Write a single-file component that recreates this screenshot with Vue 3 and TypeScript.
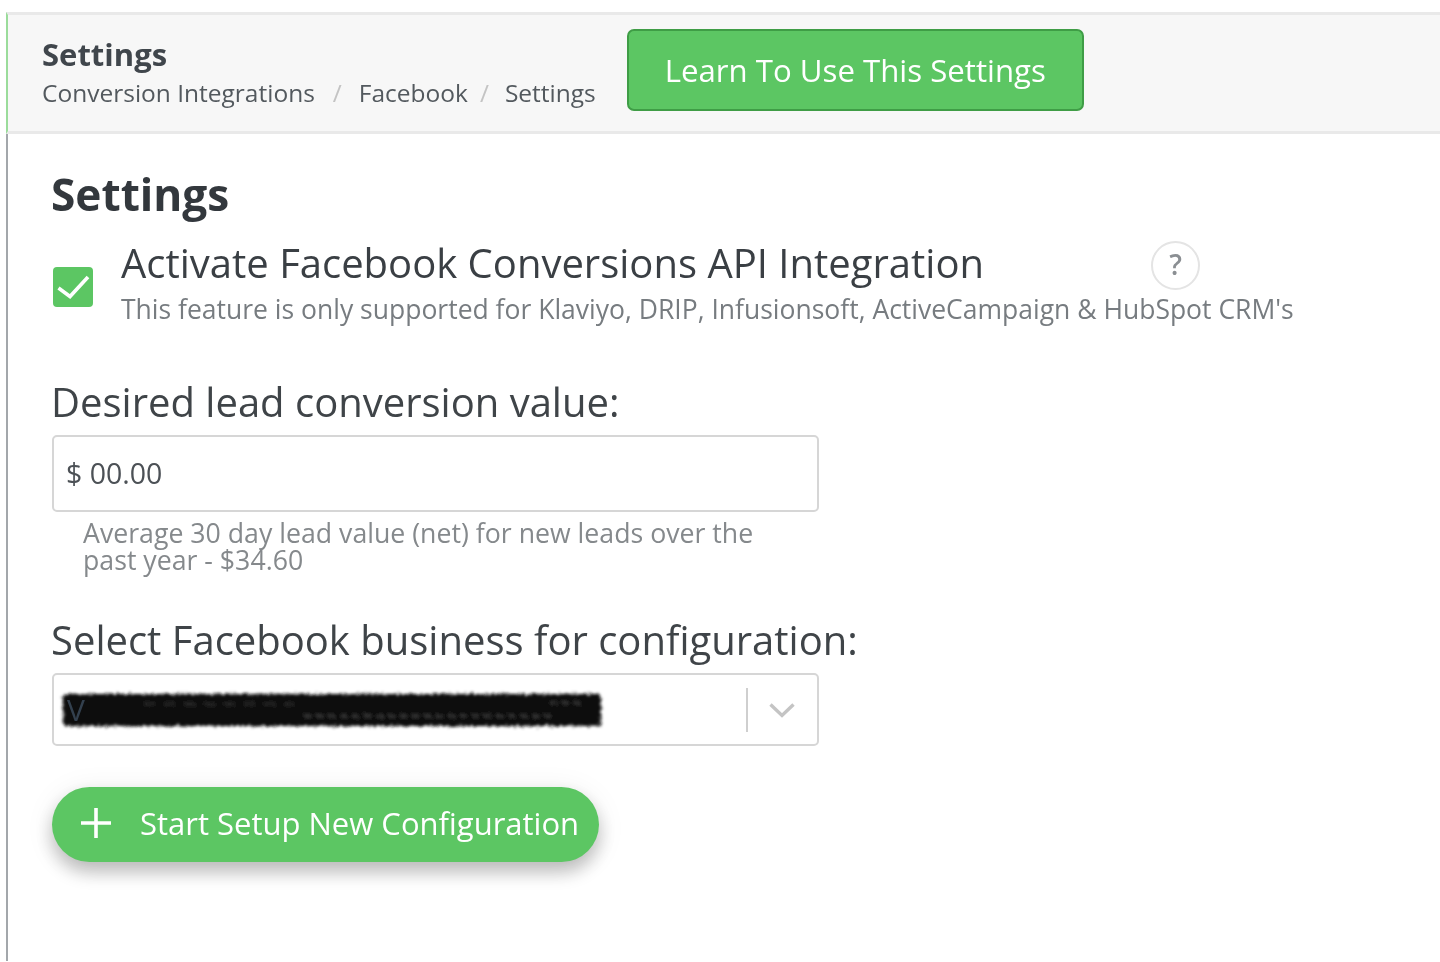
<script setup lang="ts">
const crumbs: string[] = ['Conversion Integrations', 'Facebook', 'Settings']
</script>

<template>
  <div class="page">
    <header class="bar">
      <div class="titles">
        <div class="bar-title">Settings</div>
        <nav class="crumbs">
          <span class="crumb c1">{{ crumbs[0] }}</span>
          <span class="sep s1">/</span>
          <span class="crumb">{{ crumbs[1] }}</span>
          <span class="sep s2">/</span>
          <span class="crumb">{{ crumbs[2] }}</span>
        </nav>
      </div>
      <button class="learn" type="button">Learn To Use This Settings</button>
    </header>
    <main class="body">
      <h2 class="heading">Settings</h2>
      <div class="activate">
        <span class="check">
          <svg width="40" height="40" viewBox="0 0 40 40" fill="none">
            <path d="M5.5 21 L17 29.5 L35 10" stroke="#fff" stroke-width="3.6" />
          </svg>
        </span>
        <div class="activate-text">
          <div class="activate-row">
            <span class="activate-label">Activate Facebook Conversions API Integration</span>
            <span class="help">?</span>
          </div>
          <div class="activate-note">This feature is only supported for Klaviyo, DRIP, Infusionsoft, ActiveCampaign &amp; HubSpot CRM's</div>
        </div>
      </div>
      <label class="field-label first">Desired lead conversion value:</label>
      <div class="input">$ 00.00</div>
      <p class="hint">Average 30 day lead value (net) for new leads over the past year - $34.60</p>
      <label class="field-label second">Select Facebook business for configuration:</label>
      <div class="select">
        <svg class="scribble" width="552" height="48" viewBox="0 0 552 48" fill="none">
          <defs>
            <filter id="rough" x="-5%" y="-40%" width="110%" height="180%">
              <feTurbulence type="fractalNoise" baseFrequency="0.35 0.8" numOctaves="2" seed="4" result="n" />
              <feDisplacementMap in="SourceGraphic" in2="n" scale="7" />
              <feGaussianBlur stdDeviation="1.4" />
            </filter>
          </defs>
          <g filter="url(#rough)">
            <rect x="9" y="8" width="538" height="32" rx="4" fill="#101010" />
            <path d="M250 30 H500 M496 17 H532" stroke="#343434" stroke-width="3" stroke-dasharray="7 5" />
            <path d="M90 18 H240" stroke="#262626" stroke-width="3" stroke-dasharray="11 9" />
          </g>
          <text x="13" y="35" class="scribble-v">V</text>
        </svg>
        <span class="divider"></span>
        <svg class="chev" width="26" height="16" viewBox="0 0 26 16" fill="none">
          <path d="M1.5 2.5 L13 13.5 L24.5 2.5" stroke="#c4c4c4" stroke-width="3.4" />
        </svg>
      </div>
      <button class="start" type="button">
        <svg width="32" height="32" viewBox="0 0 32 32" fill="none">
          <path d="M16 1 V31 M1 16 H31" stroke="#fff" stroke-width="3.6" />
        </svg>
        <span>Start Setup New Configuration</span>
      </button>
    </main>
  </div>
</template>

<style>
html, body { margin: 0; background: #fff; }
</style>

<style scoped>
.page {
  box-sizing: border-box;
  height: 962px;
  padding: 12px 0 0 6px;
  overflow: hidden;
  font-family: "Open Sans", sans-serif;
  color: #3a3f44;
  filter: blur(0.6px);
}
.bar {
  box-sizing: border-box;
  height: 122px;
  display: flex;
  align-items: flex-start;
  gap: 31px;
  padding: 20px 0 0 34px;
  background: #f7f7f7;
  border-top: 3px solid #e9e9e9;
  border-bottom: 3px solid #e9e9e9;
  border-left: 2px solid #9bdc9b;
}
.bar-title {
  font-size: 31px;
  font-weight: 700;
  line-height: 38px;
  color: #40464c;
}
.crumbs {
  display: flex;
  margin-top: 3px;
  font-size: 24.5px;
  line-height: 34px;
  color: #53595e;
  white-space: nowrap;
}
.sep { color: #c4c4c4; }
.s1 { margin: 0 17px 0 18px; }
.s2 { margin: 0 16px 0 12px; }
.learn {
  box-sizing: border-box;
  width: 457px;
  height: 82px;
  margin-top: -6px;
  border: 2px solid #3f9d46;
  border-radius: 7px;
  background: #5cc663;
  color: #fff;
  font-family: inherit;
  font-size: 31.2px;
}
.body {
  box-sizing: border-box;
  height: 827px;
  padding: 32px 0 0 44px;
  border-left: 2px solid #a3a7ab;
}
.heading {
  margin: 0 0 0 -1px;
  font-size: 44.2px;
  line-height: 56px;
  font-weight: 700;
  color: #33383d;
}
.activate {
  display: flex;
  gap: 28px;
  margin-top: 15px;
}
.check {
  flex: none;
  width: 40px;
  height: 40px;
  margin: 30px 0 0 1px;
  border-radius: 4px;
  background: #5cc663;
}
.check svg { display: block; }
.activate-text { min-width: 0; }
.activate-row {
  display: flex;
  align-items: flex-start;
  height: 52px;
}
.activate-label {
  font-size: 40px;
  line-height: 52px;
  color: #3a3f44;
  white-space: nowrap;
}
.help {
  box-sizing: border-box;
  flex: none;
  width: 49px;
  height: 49px;
  margin: 4px 0 0 167px;
  border: 2px solid #e4e4e4;
  border-radius: 50%;
  color: #8b8f93;
  font-size: 28px;
  font-weight: 600;
  line-height: 43px;
  text-align: center;
}
.activate-note {
  margin-top: 2px;
  font-size: 26.5px;
  line-height: 36px;
  color: #777c80;
  white-space: nowrap;
}
.field-label {
  display: block;
  margin-left: -1px;
  font-size: 40px;
  line-height: 52px;
  color: #3f4448;
}
.first { margin-top: 49px; }
.second { margin-top: 41px; }
.input {
  box-sizing: border-box;
  width: 767px;
  height: 77px;
  margin-top: 7px;
  padding-left: 12px;
  border: 2px solid #d6d6d6;
  border-radius: 5px;
  font-size: 28.5px;
  line-height: 72px;
  color: #4c5156;
}
.hint {
  width: 700px;
  margin: 7px 0 0 31px;
  font-size: 26.7px;
  line-height: 27px;
  color: #85898c;
}
.select {
  box-sizing: border-box;
  width: 767px;
  height: 73px;
  margin-top: 7px;
  display: flex;
  align-items: center;
  border: 2px solid #d6d6d6;
  border-radius: 5px;
}
.scribble {
  flex: none;
  overflow: visible;
}
.scribble-v {
  font-family: "Open Sans", sans-serif;
  font-size: 30px;
  fill: #33404e;
}
.divider {
  width: 2px;
  height: 44px;
  margin-left: 140px;
  background: #cfcfcf;
}
.chev { margin-left: 21px; }
.start {
  display: flex;
  align-items: center;
  gap: 28px;
  box-sizing: border-box;
  width: 547px;
  height: 75px;
  margin-top: 41px;
  padding: 0 0 3px 28px;
  border: 0;
  border-radius: 38px;
  background: #5cc663;
  color: #fff;
  font-family: inherit;
  font-size: 31px;
  box-shadow: 0 10px 18px rgba(0, 0, 0, 0.24), 0 4px 30px rgba(0, 0, 0, 0.08);
}
</style>
